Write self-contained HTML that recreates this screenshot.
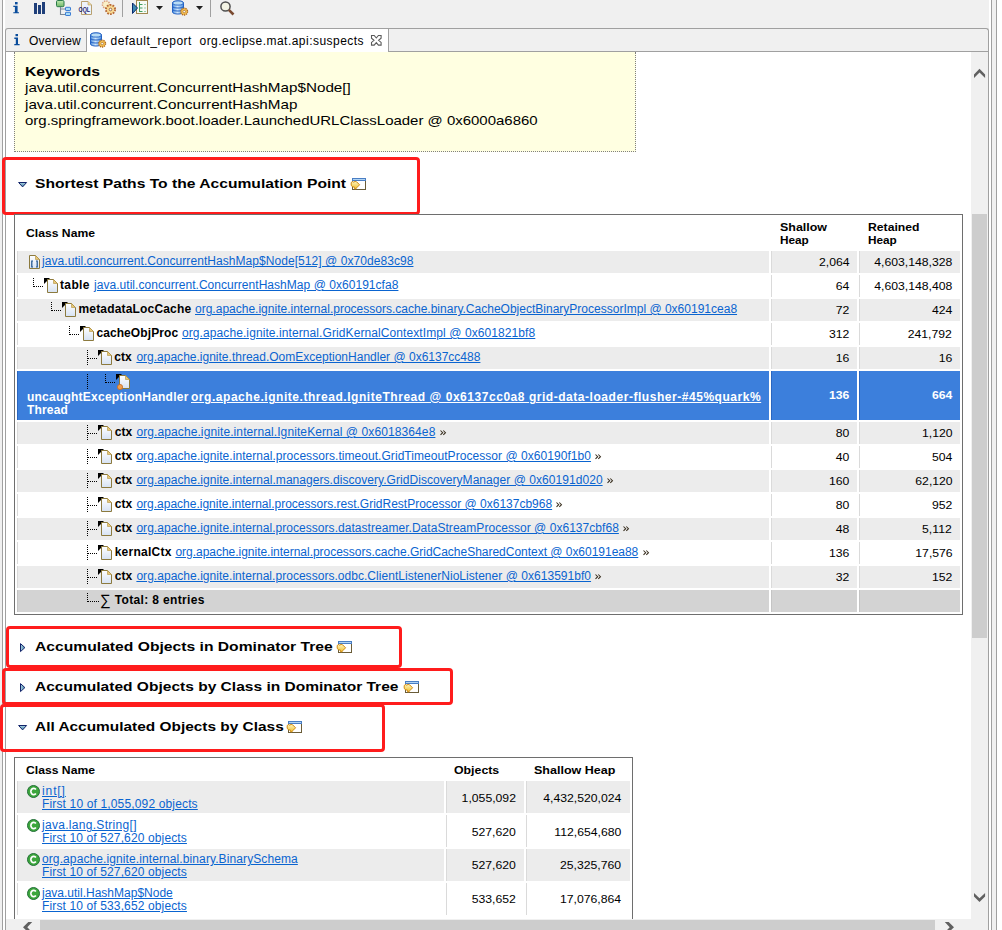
<!DOCTYPE html><html><head><meta charset="utf-8"><style>
html,body{margin:0;padding:0}
body{width:1002px;height:930px;overflow:hidden;position:relative;background:#f0f0f0;font-family:"Liberation Sans",sans-serif}
.a{position:absolute}
.t{position:absolute;white-space:nowrap}
.u{text-decoration:underline;color:#1a5fd6}
svg{position:absolute;overflow:visible}
</style></head><body>
<div class="a" style="left:2px;top:0px;width:1px;height:930px;background:#a0a0a0"></div>
<div class="a" style="left:3px;top:0px;width:2px;height:930px;background:#fff"></div>
<div class="a" style="left:989px;top:0px;width:2px;height:930px;background:#fff"></div>
<div class="a" style="left:991px;top:0px;width:1px;height:930px;background:#a0a0a0"></div>
<div class="a" style="left:996px;top:0px;width:1px;height:930px;background:#a0a0a0"></div>
<div class="a" style="left:997px;top:0px;width:5px;height:930px;background:#fff"></div>
<div class="a" style="left:5px;top:28px;width:982px;height:902px;border:1px solid #a0a0a0;border-bottom:none;border-radius:3px 3px 0 0;background:#f0f0f0"></div>
<div class="a" style="left:6px;top:51px;width:982px;height:1px;background:#a0a0a0"></div>
<div class="a" style="left:87px;top:29px;width:301px;height:23px;background:#fff"></div>
<div class="a" style="left:86px;top:29px;width:1px;height:22px;background:#a0a0a0"></div>
<div class="a" style="left:388px;top:29px;width:1px;height:22px;background:#a0a0a0"></div>
<div class="a" style="left:6px;top:52px;width:965px;height:867px;background:#fff"></div>
<svg style="left:14px;top:34px" width="6" height="12"><rect x="1.5" y="0" width="2.5" height="2.2" fill="#0a4d9c"/><path d="M0.3,3.6 H4 V10 H5.6 V11.3 H0.3 V10 H1.8 V4.9 H0.3 Z" fill="#0a4d9c"/></svg>
<div class="t" style="left:29px;top:35.44px;font-size:12px;line-height:13.8px;font-weight:normal;color:#000;letter-spacing:0.25px;">Overview</div>
<svg style="left:90px;top:32px" width="17" height="16">
<defs><linearGradient id="db90" x1="0" x2="1"><stop offset="0" stop-color="#4a8ee0"/><stop offset="0.45" stop-color="#cfe6fa"/><stop offset="1" stop-color="#4a8ee0"/></linearGradient></defs>
<path d="M0.5,3 C0.5,0.3 11.5,0.3 11.5,3 V12 C11.5,14.7 0.5,14.7 0.5,12 Z" fill="url(#db90)" stroke="#2462c4" stroke-width="1"/>
<ellipse cx="6" cy="3" rx="5.3" ry="2.1" fill="#b8dcf6" stroke="#2462c4" stroke-width="0.9"/>
<path d="M0.5,6.3 C0.5,8.6 11.5,8.6 11.5,6.3 M0.5,9.3 C0.5,11.6 11.5,11.6 11.5,9.3" fill="none" stroke="#2462c4" stroke-width="1"/>
<circle cx="12.2" cy="11.6" r="3.4" fill="#f5c050" stroke="#b06a20" stroke-width="1.3" stroke-dasharray="1.3 0.8"/>
<circle cx="12.2" cy="11.6" r="1.2" fill="#fff" stroke="#9a6020" stroke-width="0.6"/>
</svg>
<div class="t" style="left:110.5px;top:35.44px;font-size:12px;line-height:13.8px;font-weight:normal;color:#000;letter-spacing:0.53px;">default_report</div>
<div class="t" style="left:199.5px;top:35.44px;font-size:12px;line-height:13.8px;font-weight:normal;color:#000;letter-spacing:0.47px;">org.eclipse.mat.api:suspects</div>
<svg style="left:371px;top:35px" width="11" height="11"><path d="M0.5,0.5 H3.2 L5.3,3 L7.4,0.5 H10.1 V3.2 L7.6,5.3 L10.1,7.4 V10.1 H7.4 L5.3,7.6 L3.2,10.1 H0.5 V7.4 L3,5.3 L0.5,3.2 Z" fill="#fff" stroke="#5a5a5a" stroke-width="1.1"/></svg>
<svg style="left:13px;top:2px" width="7" height="12"><rect x="2" y="0" width="2.6" height="2.4" fill="#0a4d9c"/><path d="M0.3,3.8 H4.6 V10.3 H6 V11.3 H0.3 V10.3 H1.9 V5 H0.3 Z" fill="#0a4d9c"/></svg>
<svg style="left:34px;top:2px" width="12" height="12"><rect x="0" y="1" width="3" height="11" fill="#1f3f7a"/><rect x="4" y="3" width="3" height="9" fill="#1f3f7a"/><rect x="8" y="0" width="3" height="12" fill="#1f3f7a"/></svg>
<svg style="left:55px;top:0px" width="17" height="17"><defs><linearGradient id="tg" x1="0" y1="0" x2="0" y2="1"><stop offset="0" stop-color="#c0e8b0"/><stop offset="1" stop-color="#70b868"/></linearGradient></defs><rect x="1.5" y="0.5" width="7.5" height="6.2" rx="1.2" fill="url(#tg)" stroke="#2a7a4a"/><path d="M5.5,7 V14.5 H10.5 M5.5,9 H10.5" fill="none" stroke="#7a8898" stroke-width="1.1"/><rect x="10.5" y="7.3" width="5" height="3.2" rx="0.6" fill="#a8dcf8" stroke="#2a70d0" stroke-width="0.9"/><rect x="10.5" y="12.3" width="5" height="3.2" rx="0.6" fill="#a8dcf8" stroke="#2a70d0" stroke-width="0.9"/></svg>
<svg style="left:78px;top:1px" width="15" height="15"><path d="M3.5,0.5 H10 L13.5,4 V13.5 H3.5 Z" fill="#eef3fb" stroke="#b8a070"/><path d="M10,0.5 V4 H13.5" fill="#f0d890" stroke="#b8a070" stroke-width="0.6"/><text x="0.5" y="11" font-family="Liberation Sans" font-weight="bold" font-size="7.5" fill="#1a2070" textLength="11.5" lengthAdjust="spacingAndGlyphs">OQL</text></svg>
<svg style="left:100px;top:0px" width="17" height="17"><circle cx="6" cy="4.5" r="3.6" fill="#faf0c8" stroke="#d8a080" stroke-width="1.5" stroke-dasharray="1.4 1"/><circle cx="10.5" cy="9.5" r="4.6" fill="#f8d890" stroke="#b86a38" stroke-width="1.9" stroke-dasharray="1.7 1.2"/><circle cx="10.5" cy="9.5" r="1.3" fill="#fff" stroke="#805040" stroke-width="0.8"/></svg>
<div class="a" style="left:122px;top:0px;width:1px;height:17px;background:#a0a0a0"></div>
<svg style="left:132px;top:0px" width="17" height="15"><rect x="4.5" y="0.5" width="11" height="13" fill="#f6faf4" stroke="#a08850"/><path d="M7.5,2 V12 M7.5,4.5 H10.5 M7.5,8 H10.5 M7.5,11.5 H10.5" stroke="#40a060" stroke-width="1" fill="none"/><path d="M12.5,4.5 h1 M12.5,8 h1 M12.5,11.5 h1" stroke="#40a060" stroke-width="1.2"/><path d="M0.5,3 L5.5,8 L0.5,13.5 Z" fill="#3a88b0" stroke="#0a2a70" stroke-width="1"/></svg>
<svg style="left:156px;top:6px" width="8" height="5"><path d="M0,0 H7 L3.5,4 Z" fill="#202020"/></svg>
<svg style="left:172px;top:0px" width="17" height="16">
<defs><linearGradient id="db172" x1="0" x2="1"><stop offset="0" stop-color="#4a8ee0"/><stop offset="0.45" stop-color="#cfe6fa"/><stop offset="1" stop-color="#4a8ee0"/></linearGradient></defs>
<path d="M0.5,3 C0.5,0.3 11.5,0.3 11.5,3 V12 C11.5,14.7 0.5,14.7 0.5,12 Z" fill="url(#db172)" stroke="#2462c4" stroke-width="1"/>
<ellipse cx="6" cy="3" rx="5.3" ry="2.1" fill="#b8dcf6" stroke="#2462c4" stroke-width="0.9"/>
<path d="M0.5,6.3 C0.5,8.6 11.5,8.6 11.5,6.3 M0.5,9.3 C0.5,11.6 11.5,11.6 11.5,9.3" fill="none" stroke="#2462c4" stroke-width="1"/>
<circle cx="12.2" cy="11.6" r="3.4" fill="#f5c050" stroke="#b06a20" stroke-width="1.3" stroke-dasharray="1.3 0.8"/>
<circle cx="12.2" cy="11.6" r="1.2" fill="#fff" stroke="#9a6020" stroke-width="0.6"/>
</svg>
<svg style="left:196px;top:6px" width="8" height="5"><path d="M0,0 H7 L3.5,4 Z" fill="#202020"/></svg>
<div class="a" style="left:210px;top:0px;width:1px;height:17px;background:#a0a0a0"></div>
<svg style="left:220px;top:1px" width="15" height="15"><circle cx="5.5" cy="5.5" r="4.6" fill="#f4f4e4" stroke="#505050" stroke-width="1.5"/><path d="M8.8,8.8 L13.5,13.5" stroke="#7a4a30" stroke-width="2.6"/></svg>
<div class="a" style="left:14px;top:52px;width:620px;height:99px;border:1px dotted #808080;border-top:none;background:#ffffe1"></div>
<div class="t" style="left:25.3px;top:64.52px;font-size:13px;line-height:14.95px;font-weight:bold;color:#000;letter-spacing:0px;transform:scaleX(1.208);transform-origin:0 0;">Keywords</div>
<div class="t" style="left:25.3px;top:80.52px;font-size:13px;line-height:14.95px;font-weight:normal;color:#000;letter-spacing:0px;transform:scaleX(1.171);transform-origin:0 0;">java.util.concurrent.ConcurrentHashMap$Node[]</div>
<div class="t" style="left:25.3px;top:97.82px;font-size:13px;line-height:14.95px;font-weight:normal;color:#000;letter-spacing:0px;transform:scaleX(1.171);transform-origin:0 0;">java.util.concurrent.ConcurrentHashMap</div>
<div class="t" style="left:25.3px;top:113.52px;font-size:13px;line-height:14.95px;font-weight:normal;color:#000;letter-spacing:0px;transform:scaleX(1.151);transform-origin:0 0;">org.springframework.boot.loader.LaunchedURLClassLoader @ 0x6000a6860</div>
<svg style="left:18px;top:182px" width="10" height="6"><defs><linearGradient id="td182" x1="0" y1="0" x2="0" y2="1"><stop offset="0" stop-color="#a8d0e0"/><stop offset="1" stop-color="#4a88a8"/></linearGradient></defs><path d="M0.6,0.5 H8.6 L4.6,4.9 Z" fill="url(#td182)" stroke="#12246a" stroke-width="1" stroke-linejoin="round"/></svg>
<div class="t" style="left:34.5px;top:176.72px;font-size:13px;line-height:14.95px;font-weight:bold;color:#000;letter-spacing:0px;transform:scaleX(1.203);transform-origin:0 0;">Shortest Paths To the Accumulation Point</div>
<svg style="left:350px;top:178px" width="17" height="13"><defs><linearGradient id="sg352_178" x1="0" y1="0" x2="0" y2="1"><stop offset="0" stop-color="#fff6c0"/><stop offset="1" stop-color="#f0c030"/></linearGradient></defs><rect x="2.5" y="0.5" width="13" height="11" fill="#fff" stroke="#6a5c38"/><rect x="2" y="0" width="14" height="3" fill="#4a7ec4"/><rect x="3" y="1" width="12" height="1" fill="#b0d4f4"/><path d="M1.2,4.5 Q2.5,2.8 3.8,4.2 Q5,2.6 6.6,3.8 L9.6,6.8 L6.6,9.8 L6,10.8 H4.6 V9.2 Q2,9.4 1.2,7.2 Z" fill="url(#sg352_178)" stroke="#d08a10" stroke-width="1"/></svg>
<div class="a" style="left:2px;top:157px;width:412px;height:52px;border:3px solid #ff1c1c;border-radius:4px"></div>
<div class="a" style="left:14px;top:214px;width:947px;height:399px;border:1px solid #6e6e6e;background:#fff"></div>
<div class="t" style="left:25.5px;top:227px;font-size:11px;line-height:12.65px;font-weight:bold;color:#000;letter-spacing:0px;transform:scaleX(1.106);transform-origin:0 0;">Class Name</div>
<div class="t" style="left:779.5px;top:221px;font-size:11px;line-height:12.65px;font-weight:bold;color:#000;letter-spacing:0px;transform:scaleX(1.131);transform-origin:0 0;">Shallow</div>
<div class="t" style="left:779.5px;top:234px;font-size:11px;line-height:12.65px;font-weight:bold;color:#000;letter-spacing:0px;transform:scaleX(1.07);transform-origin:0 0;">Heap</div>
<div class="t" style="left:868px;top:221px;font-size:11px;line-height:12.65px;font-weight:bold;color:#000;letter-spacing:0px;transform:scaleX(1.108);transform-origin:0 0;">Retained</div>
<div class="t" style="left:868px;top:234px;font-size:11px;line-height:12.65px;font-weight:bold;color:#000;letter-spacing:0px;transform:scaleX(1.07);transform-origin:0 0;">Heap</div>
<div class="a" style="left:17px;top:251px;width:752px;height:22px;background:#ececec;border-left:1px solid #dadada;box-sizing:border-box"></div>
<div class="a" style="left:771px;top:251px;width:86px;height:22px;background:#ececec;border-left:1px solid #dadada;box-sizing:border-box"></div>
<div class="a" style="left:859px;top:251px;width:101px;height:22px;background:#ececec;border-left:1px solid #dadada;box-sizing:border-box"></div>
<div class="a" style="left:17px;top:275px;width:752px;height:22px;background:#fff;border-left:1px solid #dadada;box-sizing:border-box"></div>
<div class="a" style="left:771px;top:275px;width:86px;height:22px;background:#fff;border-left:1px solid #dadada;box-sizing:border-box"></div>
<div class="a" style="left:859px;top:275px;width:101px;height:22px;background:#fff;border-left:1px solid #dadada;box-sizing:border-box"></div>
<div class="a" style="left:17px;top:299px;width:752px;height:22px;background:#ececec;border-left:1px solid #dadada;box-sizing:border-box"></div>
<div class="a" style="left:771px;top:299px;width:86px;height:22px;background:#ececec;border-left:1px solid #dadada;box-sizing:border-box"></div>
<div class="a" style="left:859px;top:299px;width:101px;height:22px;background:#ececec;border-left:1px solid #dadada;box-sizing:border-box"></div>
<div class="a" style="left:17px;top:323px;width:752px;height:22px;background:#fff;border-left:1px solid #dadada;box-sizing:border-box"></div>
<div class="a" style="left:771px;top:323px;width:86px;height:22px;background:#fff;border-left:1px solid #dadada;box-sizing:border-box"></div>
<div class="a" style="left:859px;top:323px;width:101px;height:22px;background:#fff;border-left:1px solid #dadada;box-sizing:border-box"></div>
<div class="a" style="left:17px;top:347px;width:752px;height:22px;background:#ececec;border-left:1px solid #dadada;box-sizing:border-box"></div>
<div class="a" style="left:771px;top:347px;width:86px;height:22px;background:#ececec;border-left:1px solid #dadada;box-sizing:border-box"></div>
<div class="a" style="left:859px;top:347px;width:101px;height:22px;background:#ececec;border-left:1px solid #dadada;box-sizing:border-box"></div>
<div class="a" style="left:17px;top:371px;width:752px;height:49px;background:#3c7fdc;border-left:1px solid #2a66c0;box-sizing:border-box"></div>
<div class="a" style="left:771px;top:371px;width:86px;height:49px;background:#3c7fdc;border-left:1px solid #2a66c0;box-sizing:border-box"></div>
<div class="a" style="left:859px;top:371px;width:101px;height:49px;background:#3c7fdc;border-left:1px solid #2a66c0;box-sizing:border-box"></div>
<div class="a" style="left:17px;top:422px;width:752px;height:22px;background:#ececec;border-left:1px solid #dadada;box-sizing:border-box"></div>
<div class="a" style="left:771px;top:422px;width:86px;height:22px;background:#ececec;border-left:1px solid #dadada;box-sizing:border-box"></div>
<div class="a" style="left:859px;top:422px;width:101px;height:22px;background:#ececec;border-left:1px solid #dadada;box-sizing:border-box"></div>
<div class="a" style="left:17px;top:446px;width:752px;height:22px;background:#fff;border-left:1px solid #dadada;box-sizing:border-box"></div>
<div class="a" style="left:771px;top:446px;width:86px;height:22px;background:#fff;border-left:1px solid #dadada;box-sizing:border-box"></div>
<div class="a" style="left:859px;top:446px;width:101px;height:22px;background:#fff;border-left:1px solid #dadada;box-sizing:border-box"></div>
<div class="a" style="left:17px;top:470px;width:752px;height:22px;background:#ececec;border-left:1px solid #dadada;box-sizing:border-box"></div>
<div class="a" style="left:771px;top:470px;width:86px;height:22px;background:#ececec;border-left:1px solid #dadada;box-sizing:border-box"></div>
<div class="a" style="left:859px;top:470px;width:101px;height:22px;background:#ececec;border-left:1px solid #dadada;box-sizing:border-box"></div>
<div class="a" style="left:17px;top:494px;width:752px;height:22px;background:#fff;border-left:1px solid #dadada;box-sizing:border-box"></div>
<div class="a" style="left:771px;top:494px;width:86px;height:22px;background:#fff;border-left:1px solid #dadada;box-sizing:border-box"></div>
<div class="a" style="left:859px;top:494px;width:101px;height:22px;background:#fff;border-left:1px solid #dadada;box-sizing:border-box"></div>
<div class="a" style="left:17px;top:518px;width:752px;height:22px;background:#ececec;border-left:1px solid #dadada;box-sizing:border-box"></div>
<div class="a" style="left:771px;top:518px;width:86px;height:22px;background:#ececec;border-left:1px solid #dadada;box-sizing:border-box"></div>
<div class="a" style="left:859px;top:518px;width:101px;height:22px;background:#ececec;border-left:1px solid #dadada;box-sizing:border-box"></div>
<div class="a" style="left:17px;top:542px;width:752px;height:22px;background:#fff;border-left:1px solid #dadada;box-sizing:border-box"></div>
<div class="a" style="left:771px;top:542px;width:86px;height:22px;background:#fff;border-left:1px solid #dadada;box-sizing:border-box"></div>
<div class="a" style="left:859px;top:542px;width:101px;height:22px;background:#fff;border-left:1px solid #dadada;box-sizing:border-box"></div>
<div class="a" style="left:17px;top:566px;width:752px;height:22px;background:#ececec;border-left:1px solid #dadada;box-sizing:border-box"></div>
<div class="a" style="left:771px;top:566px;width:86px;height:22px;background:#ececec;border-left:1px solid #dadada;box-sizing:border-box"></div>
<div class="a" style="left:859px;top:566px;width:101px;height:22px;background:#ececec;border-left:1px solid #dadada;box-sizing:border-box"></div>
<div class="a" style="left:17px;top:590px;width:752px;height:22px;background:#d3d3d3;border-left:1px solid #c4c4c4;box-sizing:border-box"></div>
<div class="a" style="left:771px;top:590px;width:86px;height:22px;background:#d3d3d3;border-left:1px solid #c4c4c4;box-sizing:border-box"></div>
<div class="a" style="left:859px;top:590px;width:101px;height:22px;background:#d3d3d3;border-left:1px solid #c4c4c4;box-sizing:border-box"></div>
<svg style="left:29px;top:255px" width="12" height="15"><defs><linearGradient id="ag29_255" x1="0" y1="0" x2="0" y2="1"><stop offset="0" stop-color="#ffffff"/><stop offset="1" stop-color="#d6e2f3"/></linearGradient></defs><path d="M0.5,0.5 H6.5 L10.5,4.5 V13.5 H0.5 Z" fill="url(#ag29_255)" stroke="#8c7a3e"/><path d="M6.5,0.5 V4.5 H10.5 Z" fill="#e8c878" stroke="#b09040" stroke-width="0.6"/><path d="M4,6 H2.8 V12 H4 M7,6 H8.2 V12 H7" fill="none" stroke="#1a5090" stroke-width="1.2"/></svg>
<div class="t" style="left:42px;top:255.44px;font-size:12px;line-height:13.8px;font-weight:normal;color:#0a64d0;letter-spacing:0.06px;text-decoration:underline;text-underline-offset:1px">java.util.concurrent.ConcurrentHashMap$Node[512] @ 0x70de83c98</div>
<div class="t" style="right:152.40px;top:256px;font-size:11px;line-height:12.65px;font-weight:normal;color:#000;letter-spacing:0px;transform:scaleX(1.11);transform-origin:100% 0;">2,064</div>
<div class="t" style="right:49.80px;top:256px;font-size:11px;line-height:12.65px;font-weight:normal;color:#000;letter-spacing:0px;transform:scaleX(1.11);transform-origin:100% 0;">4,603,148,328</div>
<svg style="left:33px;top:278px" width="1" height="9"><line x1="0.5" y1="0" x2="0.5" y2="9" stroke="#000" stroke-dasharray="1 1"/></svg>
<svg style="left:34px;top:286px" width="10" height="1"><line x1="0" y1="0.5" x2="10" y2="0.5" stroke="#000" stroke-dasharray="1 1"/></svg>
<svg style="left:44px;top:278px" width="15" height="16"><defs><linearGradient id="dg44_278" x1="0" y1="0" x2="0" y2="1"><stop offset="0" stop-color="#ffffff"/><stop offset="1" stop-color="#d6e2f3"/></linearGradient></defs><path d="M0,0 H6 L0,6 Z" fill="#000"/><path d="M3.5,1.5 H9.5 L13.5,5.5 V14.5 H3.5 Z" fill="url(#dg44_278)" stroke="#8c7a3e"/><path d="M9.5,1.5 V5.5 H13.5 Z" fill="#e8c878" stroke="#b09040" stroke-width="0.6"/></svg>
<div class="t" style="left:60px;top:278.94px;font-size:12px;line-height:13.8px;font-weight:bold;color:#000;letter-spacing:0.36px;">table</div>
<div class="t" style="left:94px;top:278.94px;font-size:12px;line-height:13.8px;font-weight:normal;color:#0a64d0;letter-spacing:0.04px;text-decoration:underline;text-underline-offset:1px">java.util.concurrent.ConcurrentHashMap @ 0x60191cfa8</div>
<div class="t" style="right:152.40px;top:280px;font-size:11px;line-height:12.65px;font-weight:normal;color:#000;letter-spacing:0px;transform:scaleX(1.11);transform-origin:100% 0;">64</div>
<div class="t" style="right:49.80px;top:280px;font-size:11px;line-height:12.65px;font-weight:normal;color:#000;letter-spacing:0px;transform:scaleX(1.11);transform-origin:100% 0;">4,603,148,408</div>
<svg style="left:51px;top:302px" width="1" height="9"><line x1="0.5" y1="0" x2="0.5" y2="9" stroke="#000" stroke-dasharray="1 1"/></svg>
<svg style="left:52px;top:310px" width="10" height="1"><line x1="0" y1="0.5" x2="10" y2="0.5" stroke="#000" stroke-dasharray="1 1"/></svg>
<svg style="left:62px;top:302px" width="15" height="16"><defs><linearGradient id="dg62_302" x1="0" y1="0" x2="0" y2="1"><stop offset="0" stop-color="#ffffff"/><stop offset="1" stop-color="#d6e2f3"/></linearGradient></defs><path d="M0,0 H6 L0,6 Z" fill="#000"/><path d="M3.5,1.5 H9.5 L13.5,5.5 V14.5 H3.5 Z" fill="url(#dg62_302)" stroke="#8c7a3e"/><path d="M9.5,1.5 V5.5 H13.5 Z" fill="#e8c878" stroke="#b09040" stroke-width="0.6"/></svg>
<div class="t" style="left:78.5px;top:302.94px;font-size:12px;line-height:13.8px;font-weight:bold;color:#000;letter-spacing:0.17px;">metadataLocCache</div>
<div class="t" style="left:195px;top:302.94px;font-size:12px;line-height:13.8px;font-weight:normal;color:#0a64d0;letter-spacing:0.005px;text-decoration:underline;text-underline-offset:1px">org.apache.ignite.internal.processors.cache.binary.CacheObjectBinaryProcessorImpl @ 0x60191cea8</div>
<div class="t" style="right:152.40px;top:304px;font-size:11px;line-height:12.65px;font-weight:normal;color:#000;letter-spacing:0px;transform:scaleX(1.11);transform-origin:100% 0;">72</div>
<div class="t" style="right:49.80px;top:304px;font-size:11px;line-height:12.65px;font-weight:normal;color:#000;letter-spacing:0px;transform:scaleX(1.11);transform-origin:100% 0;">424</div>
<svg style="left:69px;top:326px" width="1" height="9"><line x1="0.5" y1="0" x2="0.5" y2="9" stroke="#000" stroke-dasharray="1 1"/></svg>
<svg style="left:70px;top:334px" width="10" height="1"><line x1="0" y1="0.5" x2="10" y2="0.5" stroke="#000" stroke-dasharray="1 1"/></svg>
<svg style="left:80px;top:326px" width="15" height="16"><defs><linearGradient id="dg80_326" x1="0" y1="0" x2="0" y2="1"><stop offset="0" stop-color="#ffffff"/><stop offset="1" stop-color="#d6e2f3"/></linearGradient></defs><path d="M0,0 H6 L0,6 Z" fill="#000"/><path d="M3.5,1.5 H9.5 L13.5,5.5 V14.5 H3.5 Z" fill="url(#dg80_326)" stroke="#8c7a3e"/><path d="M9.5,1.5 V5.5 H13.5 Z" fill="#e8c878" stroke="#b09040" stroke-width="0.6"/></svg>
<div class="t" style="left:96.4px;top:326.94px;font-size:12px;line-height:13.8px;font-weight:bold;color:#000;letter-spacing:0.09px;">cacheObjProc</div>
<div class="t" style="left:182px;top:326.94px;font-size:12px;line-height:13.8px;font-weight:normal;color:#0a64d0;letter-spacing:0.09px;text-decoration:underline;text-underline-offset:1px">org.apache.ignite.internal.GridKernalContextImpl @ 0x601821bf8</div>
<div class="t" style="right:152.40px;top:328px;font-size:11px;line-height:12.65px;font-weight:normal;color:#000;letter-spacing:0px;transform:scaleX(1.11);transform-origin:100% 0;">312</div>
<div class="t" style="right:49.80px;top:328px;font-size:11px;line-height:12.65px;font-weight:normal;color:#000;letter-spacing:0px;transform:scaleX(1.11);transform-origin:100% 0;">241,792</div>
<svg style="left:87px;top:350px" width="1" height="16"><line x1="0.5" y1="0" x2="0.5" y2="16" stroke="#000" stroke-dasharray="1 1"/></svg>
<svg style="left:88px;top:358px" width="10" height="1"><line x1="0" y1="0.5" x2="10" y2="0.5" stroke="#000" stroke-dasharray="1 1"/></svg>
<svg style="left:98px;top:350px" width="15" height="16"><defs><linearGradient id="dg98_350" x1="0" y1="0" x2="0" y2="1"><stop offset="0" stop-color="#ffffff"/><stop offset="1" stop-color="#d6e2f3"/></linearGradient></defs><path d="M0,0 H6 L0,6 Z" fill="#000"/><path d="M3.5,1.5 H9.5 L13.5,5.5 V14.5 H3.5 Z" fill="url(#dg98_350)" stroke="#8c7a3e"/><path d="M9.5,1.5 V5.5 H13.5 Z" fill="#e8c878" stroke="#b09040" stroke-width="0.6"/></svg>
<div class="t" style="left:114.3px;top:350.94px;font-size:12px;line-height:13.8px;font-weight:bold;color:#000;letter-spacing:0.06px;">ctx</div>
<div class="t" style="left:136.4px;top:350.94px;font-size:12px;line-height:13.8px;font-weight:normal;color:#0a64d0;letter-spacing:0.005px;text-decoration:underline;text-underline-offset:1px">org.apache.ignite.thread.OomExceptionHandler @ 0x6137cc488</div>
<div class="t" style="right:152.40px;top:352px;font-size:11px;line-height:12.65px;font-weight:normal;color:#000;letter-spacing:0px;transform:scaleX(1.11);transform-origin:100% 0;">16</div>
<div class="t" style="right:49.80px;top:352px;font-size:11px;line-height:12.65px;font-weight:normal;color:#000;letter-spacing:0px;transform:scaleX(1.11);transform-origin:100% 0;">16</div>
<svg style="left:87px;top:374px" width="1" height="15"><line x1="0.5" y1="0" x2="0.5" y2="15" stroke="#000" stroke-dasharray="1 1"/></svg>
<svg style="left:105px;top:374px" width="1" height="9"><line x1="0.5" y1="0" x2="0.5" y2="9" stroke="#000" stroke-dasharray="1 1"/></svg>
<svg style="left:106px;top:382px" width="10" height="1"><line x1="0" y1="0.5" x2="10" y2="0.5" stroke="#000" stroke-dasharray="1 1"/></svg>
<svg style="left:116px;top:374px" width="15" height="16"><defs><linearGradient id="dg116_374" x1="0" y1="0" x2="0" y2="1"><stop offset="0" stop-color="#ffffff"/><stop offset="1" stop-color="#d6e2f3"/></linearGradient></defs><path d="M0,0 H6 L0,6 Z" fill="#000"/><path d="M3.5,1.5 H9.5 L13.5,5.5 V14.5 H3.5 Z" fill="url(#dg116_374)" stroke="#8c7a3e"/><path d="M9.5,1.5 V5.5 H13.5 Z" fill="#e8c878" stroke="#b09040" stroke-width="0.6"/><circle cx="4" cy="13" r="2.6" fill="#f0a050" stroke="#c86a20" stroke-width="0.8"/></svg>
<div class="t" style="left:27px;top:390.94px;font-size:12px;line-height:13.8px;font-weight:bold;color:#fff;letter-spacing:0.23px;">uncaughtExceptionHandler</div>
<div class="t" style="left:191px;top:390.94px;font-size:12px;line-height:13.8px;font-weight:bold;color:#fff;letter-spacing:0.54px;text-decoration:underline;text-underline-offset:1px">org.apache.ignite.thread.IgniteThread @ 0x6137cc0a8 grid-data-loader-flusher-#45%quark%</div>
<div class="t" style="left:27px;top:404.44px;font-size:12px;line-height:13.8px;font-weight:bold;color:#fff;letter-spacing:0.17px;">Thread</div>
<div class="t" style="right:152.40px;top:389px;font-size:11px;line-height:12.65px;font-weight:bold;color:#fff;letter-spacing:0px;transform:scaleX(1.11);transform-origin:100% 0;">136</div>
<div class="t" style="right:49.80px;top:389px;font-size:11px;line-height:12.65px;font-weight:bold;color:#fff;letter-spacing:0px;transform:scaleX(1.11);transform-origin:100% 0;">664</div>
<svg style="left:87px;top:425px" width="1" height="16"><line x1="0.5" y1="0" x2="0.5" y2="16" stroke="#000" stroke-dasharray="1 1"/></svg>
<svg style="left:88px;top:433px" width="10" height="1"><line x1="0" y1="0.5" x2="10" y2="0.5" stroke="#000" stroke-dasharray="1 1"/></svg>
<svg style="left:98px;top:425px" width="15" height="16"><defs><linearGradient id="dg98_425" x1="0" y1="0" x2="0" y2="1"><stop offset="0" stop-color="#ffffff"/><stop offset="1" stop-color="#d6e2f3"/></linearGradient></defs><path d="M0,0 H6 L0,6 Z" fill="#000"/><path d="M3.5,1.5 H9.5 L13.5,5.5 V14.5 H3.5 Z" fill="url(#dg98_425)" stroke="#8c7a3e"/><path d="M9.5,1.5 V5.5 H13.5 Z" fill="#e8c878" stroke="#b09040" stroke-width="0.6"/></svg>
<div class="t" style="left:114.7px;top:425.94px;font-size:12px;line-height:13.8px;font-weight:bold;color:#000;letter-spacing:0.06px;">ctx</div>
<div class="t" style="left:136.4px;top:425.94px;font-size:12px;line-height:13.8px;font-weight:normal;color:#0a64d0;letter-spacing:0.1px;text-decoration:underline;text-underline-offset:1px">org.apache.ignite.internal.IgniteKernal @ 0x6018364e8</div>
<svg style="left:439.5px;top:430px" width="8" height="6"><path d="M0.5,0.5 L2.7,2.7 L0.5,4.9 M3.3,0.5 L5.5,2.7 L3.3,4.9" fill="none" stroke="#3a3020" stroke-width="1.05"/></svg>
<div class="t" style="right:152.40px;top:427px;font-size:11px;line-height:12.65px;font-weight:normal;color:#000;letter-spacing:0px;transform:scaleX(1.11);transform-origin:100% 0;">80</div>
<div class="t" style="right:49.80px;top:427px;font-size:11px;line-height:12.65px;font-weight:normal;color:#000;letter-spacing:0px;transform:scaleX(1.11);transform-origin:100% 0;">1,120</div>
<svg style="left:87px;top:449px" width="1" height="16"><line x1="0.5" y1="0" x2="0.5" y2="16" stroke="#000" stroke-dasharray="1 1"/></svg>
<svg style="left:88px;top:457px" width="10" height="1"><line x1="0" y1="0.5" x2="10" y2="0.5" stroke="#000" stroke-dasharray="1 1"/></svg>
<svg style="left:98px;top:449px" width="15" height="16"><defs><linearGradient id="dg98_449" x1="0" y1="0" x2="0" y2="1"><stop offset="0" stop-color="#ffffff"/><stop offset="1" stop-color="#d6e2f3"/></linearGradient></defs><path d="M0,0 H6 L0,6 Z" fill="#000"/><path d="M3.5,1.5 H9.5 L13.5,5.5 V14.5 H3.5 Z" fill="url(#dg98_449)" stroke="#8c7a3e"/><path d="M9.5,1.5 V5.5 H13.5 Z" fill="#e8c878" stroke="#b09040" stroke-width="0.6"/></svg>
<div class="t" style="left:114.7px;top:449.94px;font-size:12px;line-height:13.8px;font-weight:bold;color:#000;letter-spacing:0.06px;">ctx</div>
<div class="t" style="left:136.4px;top:449.94px;font-size:12px;line-height:13.8px;font-weight:normal;color:#0a64d0;letter-spacing:0.05px;text-decoration:underline;text-underline-offset:1px">org.apache.ignite.internal.processors.timeout.GridTimeoutProcessor @ 0x60190f1b0</div>
<svg style="left:595px;top:454px" width="8" height="6"><path d="M0.5,0.5 L2.7,2.7 L0.5,4.9 M3.3,0.5 L5.5,2.7 L3.3,4.9" fill="none" stroke="#3a3020" stroke-width="1.05"/></svg>
<div class="t" style="right:152.40px;top:451px;font-size:11px;line-height:12.65px;font-weight:normal;color:#000;letter-spacing:0px;transform:scaleX(1.11);transform-origin:100% 0;">40</div>
<div class="t" style="right:49.80px;top:451px;font-size:11px;line-height:12.65px;font-weight:normal;color:#000;letter-spacing:0px;transform:scaleX(1.11);transform-origin:100% 0;">504</div>
<svg style="left:87px;top:473px" width="1" height="16"><line x1="0.5" y1="0" x2="0.5" y2="16" stroke="#000" stroke-dasharray="1 1"/></svg>
<svg style="left:88px;top:481px" width="10" height="1"><line x1="0" y1="0.5" x2="10" y2="0.5" stroke="#000" stroke-dasharray="1 1"/></svg>
<svg style="left:98px;top:473px" width="15" height="16"><defs><linearGradient id="dg98_473" x1="0" y1="0" x2="0" y2="1"><stop offset="0" stop-color="#ffffff"/><stop offset="1" stop-color="#d6e2f3"/></linearGradient></defs><path d="M0,0 H6 L0,6 Z" fill="#000"/><path d="M3.5,1.5 H9.5 L13.5,5.5 V14.5 H3.5 Z" fill="url(#dg98_473)" stroke="#8c7a3e"/><path d="M9.5,1.5 V5.5 H13.5 Z" fill="#e8c878" stroke="#b09040" stroke-width="0.6"/></svg>
<div class="t" style="left:114.7px;top:473.94px;font-size:12px;line-height:13.8px;font-weight:bold;color:#000;letter-spacing:0.06px;">ctx</div>
<div class="t" style="left:136.4px;top:473.94px;font-size:12px;line-height:13.8px;font-weight:normal;color:#0a64d0;letter-spacing:0.05px;text-decoration:underline;text-underline-offset:1px">org.apache.ignite.internal.managers.discovery.GridDiscoveryManager @ 0x60191d020</div>
<svg style="left:606.5px;top:478px" width="8" height="6"><path d="M0.5,0.5 L2.7,2.7 L0.5,4.9 M3.3,0.5 L5.5,2.7 L3.3,4.9" fill="none" stroke="#3a3020" stroke-width="1.05"/></svg>
<div class="t" style="right:152.40px;top:475px;font-size:11px;line-height:12.65px;font-weight:normal;color:#000;letter-spacing:0px;transform:scaleX(1.11);transform-origin:100% 0;">160</div>
<div class="t" style="right:49.80px;top:475px;font-size:11px;line-height:12.65px;font-weight:normal;color:#000;letter-spacing:0px;transform:scaleX(1.11);transform-origin:100% 0;">62,120</div>
<svg style="left:87px;top:497px" width="1" height="16"><line x1="0.5" y1="0" x2="0.5" y2="16" stroke="#000" stroke-dasharray="1 1"/></svg>
<svg style="left:88px;top:505px" width="10" height="1"><line x1="0" y1="0.5" x2="10" y2="0.5" stroke="#000" stroke-dasharray="1 1"/></svg>
<svg style="left:98px;top:497px" width="15" height="16"><defs><linearGradient id="dg98_497" x1="0" y1="0" x2="0" y2="1"><stop offset="0" stop-color="#ffffff"/><stop offset="1" stop-color="#d6e2f3"/></linearGradient></defs><path d="M0,0 H6 L0,6 Z" fill="#000"/><path d="M3.5,1.5 H9.5 L13.5,5.5 V14.5 H3.5 Z" fill="url(#dg98_497)" stroke="#8c7a3e"/><path d="M9.5,1.5 V5.5 H13.5 Z" fill="#e8c878" stroke="#b09040" stroke-width="0.6"/></svg>
<div class="t" style="left:114.7px;top:497.94px;font-size:12px;line-height:13.8px;font-weight:bold;color:#000;letter-spacing:0.06px;">ctx</div>
<div class="t" style="left:136.4px;top:497.94px;font-size:12px;line-height:13.8px;font-weight:normal;color:#0a64d0;letter-spacing:0.0px;text-decoration:underline;text-underline-offset:1px">org.apache.ignite.internal.processors.rest.GridRestProcessor @ 0x6137cb968</div>
<svg style="left:556px;top:502px" width="8" height="6"><path d="M0.5,0.5 L2.7,2.7 L0.5,4.9 M3.3,0.5 L5.5,2.7 L3.3,4.9" fill="none" stroke="#3a3020" stroke-width="1.05"/></svg>
<div class="t" style="right:152.40px;top:499px;font-size:11px;line-height:12.65px;font-weight:normal;color:#000;letter-spacing:0px;transform:scaleX(1.11);transform-origin:100% 0;">80</div>
<div class="t" style="right:49.80px;top:499px;font-size:11px;line-height:12.65px;font-weight:normal;color:#000;letter-spacing:0px;transform:scaleX(1.11);transform-origin:100% 0;">952</div>
<svg style="left:87px;top:521px" width="1" height="16"><line x1="0.5" y1="0" x2="0.5" y2="16" stroke="#000" stroke-dasharray="1 1"/></svg>
<svg style="left:88px;top:529px" width="10" height="1"><line x1="0" y1="0.5" x2="10" y2="0.5" stroke="#000" stroke-dasharray="1 1"/></svg>
<svg style="left:98px;top:521px" width="15" height="16"><defs><linearGradient id="dg98_521" x1="0" y1="0" x2="0" y2="1"><stop offset="0" stop-color="#ffffff"/><stop offset="1" stop-color="#d6e2f3"/></linearGradient></defs><path d="M0,0 H6 L0,6 Z" fill="#000"/><path d="M3.5,1.5 H9.5 L13.5,5.5 V14.5 H3.5 Z" fill="url(#dg98_521)" stroke="#8c7a3e"/><path d="M9.5,1.5 V5.5 H13.5 Z" fill="#e8c878" stroke="#b09040" stroke-width="0.6"/></svg>
<div class="t" style="left:114.7px;top:521.94px;font-size:12px;line-height:13.8px;font-weight:bold;color:#000;letter-spacing:0.06px;">ctx</div>
<div class="t" style="left:136.4px;top:521.94px;font-size:12px;line-height:13.8px;font-weight:normal;color:#0a64d0;letter-spacing:0.04px;text-decoration:underline;text-underline-offset:1px">org.apache.ignite.internal.processors.datastreamer.DataStreamProcessor @ 0x6137cbf68</div>
<svg style="left:623px;top:526px" width="8" height="6"><path d="M0.5,0.5 L2.7,2.7 L0.5,4.9 M3.3,0.5 L5.5,2.7 L3.3,4.9" fill="none" stroke="#3a3020" stroke-width="1.05"/></svg>
<div class="t" style="right:152.40px;top:523px;font-size:11px;line-height:12.65px;font-weight:normal;color:#000;letter-spacing:0px;transform:scaleX(1.11);transform-origin:100% 0;">48</div>
<div class="t" style="right:49.80px;top:523px;font-size:11px;line-height:12.65px;font-weight:normal;color:#000;letter-spacing:0px;transform:scaleX(1.11);transform-origin:100% 0;">5,112</div>
<svg style="left:87px;top:545px" width="1" height="16"><line x1="0.5" y1="0" x2="0.5" y2="16" stroke="#000" stroke-dasharray="1 1"/></svg>
<svg style="left:88px;top:553px" width="10" height="1"><line x1="0" y1="0.5" x2="10" y2="0.5" stroke="#000" stroke-dasharray="1 1"/></svg>
<svg style="left:98px;top:545px" width="15" height="16"><defs><linearGradient id="dg98_545" x1="0" y1="0" x2="0" y2="1"><stop offset="0" stop-color="#ffffff"/><stop offset="1" stop-color="#d6e2f3"/></linearGradient></defs><path d="M0,0 H6 L0,6 Z" fill="#000"/><path d="M3.5,1.5 H9.5 L13.5,5.5 V14.5 H3.5 Z" fill="url(#dg98_545)" stroke="#8c7a3e"/><path d="M9.5,1.5 V5.5 H13.5 Z" fill="#e8c878" stroke="#b09040" stroke-width="0.6"/></svg>
<div class="t" style="left:114.7px;top:545.94px;font-size:12px;line-height:13.8px;font-weight:bold;color:#000;letter-spacing:0.26px;">kernalCtx</div>
<div class="t" style="left:175.4px;top:545.94px;font-size:12px;line-height:13.8px;font-weight:normal;color:#0a64d0;letter-spacing:-0.02px;text-decoration:underline;text-underline-offset:1px">org.apache.ignite.internal.processors.cache.GridCacheSharedContext @ 0x60191ea88</div>
<svg style="left:643px;top:550px" width="8" height="6"><path d="M0.5,0.5 L2.7,2.7 L0.5,4.9 M3.3,0.5 L5.5,2.7 L3.3,4.9" fill="none" stroke="#3a3020" stroke-width="1.05"/></svg>
<div class="t" style="right:152.40px;top:547px;font-size:11px;line-height:12.65px;font-weight:normal;color:#000;letter-spacing:0px;transform:scaleX(1.11);transform-origin:100% 0;">136</div>
<div class="t" style="right:49.80px;top:547px;font-size:11px;line-height:12.65px;font-weight:normal;color:#000;letter-spacing:0px;transform:scaleX(1.11);transform-origin:100% 0;">17,576</div>
<svg style="left:87px;top:569px" width="1" height="16"><line x1="0.5" y1="0" x2="0.5" y2="16" stroke="#000" stroke-dasharray="1 1"/></svg>
<svg style="left:88px;top:577px" width="10" height="1"><line x1="0" y1="0.5" x2="10" y2="0.5" stroke="#000" stroke-dasharray="1 1"/></svg>
<svg style="left:98px;top:569px" width="15" height="16"><defs><linearGradient id="dg98_569" x1="0" y1="0" x2="0" y2="1"><stop offset="0" stop-color="#ffffff"/><stop offset="1" stop-color="#d6e2f3"/></linearGradient></defs><path d="M0,0 H6 L0,6 Z" fill="#000"/><path d="M3.5,1.5 H9.5 L13.5,5.5 V14.5 H3.5 Z" fill="url(#dg98_569)" stroke="#8c7a3e"/><path d="M9.5,1.5 V5.5 H13.5 Z" fill="#e8c878" stroke="#b09040" stroke-width="0.6"/></svg>
<div class="t" style="left:114.7px;top:569.94px;font-size:12px;line-height:13.8px;font-weight:bold;color:#000;letter-spacing:0.06px;">ctx</div>
<div class="t" style="left:136.4px;top:569.94px;font-size:12px;line-height:13.8px;font-weight:normal;color:#0a64d0;letter-spacing:0.035px;text-decoration:underline;text-underline-offset:1px">org.apache.ignite.internal.processors.odbc.ClientListenerNioListener @ 0x613591bf0</div>
<svg style="left:595px;top:574px" width="8" height="6"><path d="M0.5,0.5 L2.7,2.7 L0.5,4.9 M3.3,0.5 L5.5,2.7 L3.3,4.9" fill="none" stroke="#3a3020" stroke-width="1.05"/></svg>
<div class="t" style="right:152.40px;top:571px;font-size:11px;line-height:12.65px;font-weight:normal;color:#000;letter-spacing:0px;transform:scaleX(1.11);transform-origin:100% 0;">32</div>
<div class="t" style="right:49.80px;top:571px;font-size:11px;line-height:12.65px;font-weight:normal;color:#000;letter-spacing:0px;transform:scaleX(1.11);transform-origin:100% 0;">152</div>
<svg style="left:87px;top:593px" width="1" height="9"><line x1="0.5" y1="0" x2="0.5" y2="9" stroke="#000" stroke-dasharray="1 1"/></svg>
<svg style="left:88px;top:601px" width="11" height="1"><line x1="0" y1="0.5" x2="11" y2="0.5" stroke="#000" stroke-dasharray="1 1"/></svg>
<div class="t" style="left:100px;top:591px;font-size:15px;line-height:17px;color:#000">&sum;</div>
<div class="t" style="left:114.7px;top:594.44px;font-size:12px;line-height:13.8px;font-weight:bold;color:#000;letter-spacing:0.35px;">Total: 8 entries</div>
<svg style="left:20px;top:643px" width="6" height="10"><defs><linearGradient id="tr643" x1="0" y1="0" x2="1" y2="0"><stop offset="0" stop-color="#a8d0e0"/><stop offset="1" stop-color="#4a88a8"/></linearGradient></defs><path d="M0.5,0.6 V8.6 L4.9,4.6 Z" fill="url(#tr643)" stroke="#12246a" stroke-width="1" stroke-linejoin="round"/></svg>
<div class="t" style="left:34.5px;top:640.02px;font-size:13px;line-height:14.95px;font-weight:bold;color:#000;letter-spacing:0px;transform:scaleX(1.205);transform-origin:0 0;">Accumulated Objects in Dominator Tree</div>
<svg style="left:336px;top:641px" width="17" height="13"><defs><linearGradient id="sg338_641" x1="0" y1="0" x2="0" y2="1"><stop offset="0" stop-color="#fff6c0"/><stop offset="1" stop-color="#f0c030"/></linearGradient></defs><rect x="2.5" y="0.5" width="13" height="11" fill="#fff" stroke="#6a5c38"/><rect x="2" y="0" width="14" height="3" fill="#4a7ec4"/><rect x="3" y="1" width="12" height="1" fill="#b0d4f4"/><path d="M1.2,4.5 Q2.5,2.8 3.8,4.2 Q5,2.6 6.6,3.8 L9.6,6.8 L6.6,9.8 L6,10.8 H4.6 V9.2 Q2,9.4 1.2,7.2 Z" fill="url(#sg338_641)" stroke="#d08a10" stroke-width="1"/></svg>
<div class="a" style="left:6px;top:626px;width:390px;height:36px;border:3px solid #ff1c1c;border-radius:4px"></div>
<svg style="left:20px;top:683px" width="6" height="10"><defs><linearGradient id="tr683" x1="0" y1="0" x2="1" y2="0"><stop offset="0" stop-color="#a8d0e0"/><stop offset="1" stop-color="#4a88a8"/></linearGradient></defs><path d="M0.5,0.6 V8.6 L4.9,4.6 Z" fill="url(#tr683)" stroke="#12246a" stroke-width="1" stroke-linejoin="round"/></svg>
<div class="t" style="left:34.5px;top:679.82px;font-size:13px;line-height:14.95px;font-weight:bold;color:#000;letter-spacing:0px;transform:scaleX(1.195);transform-origin:0 0;">Accumulated Objects by Class in Dominator Tree</div>
<svg style="left:403px;top:681px" width="17" height="13"><defs><linearGradient id="sg405_681" x1="0" y1="0" x2="0" y2="1"><stop offset="0" stop-color="#fff6c0"/><stop offset="1" stop-color="#f0c030"/></linearGradient></defs><rect x="2.5" y="0.5" width="13" height="11" fill="#fff" stroke="#6a5c38"/><rect x="2" y="0" width="14" height="3" fill="#4a7ec4"/><rect x="3" y="1" width="12" height="1" fill="#b0d4f4"/><path d="M1.2,4.5 Q2.5,2.8 3.8,4.2 Q5,2.6 6.6,3.8 L9.6,6.8 L6.6,9.8 L6,10.8 H4.6 V9.2 Q2,9.4 1.2,7.2 Z" fill="url(#sg405_681)" stroke="#d08a10" stroke-width="1"/></svg>
<div class="a" style="left:2px;top:668px;width:445px;height:31px;border:3px solid #ff1c1c;border-radius:4px"></div>
<svg style="left:18px;top:725px" width="10" height="6"><defs><linearGradient id="td725" x1="0" y1="0" x2="0" y2="1"><stop offset="0" stop-color="#a8d0e0"/><stop offset="1" stop-color="#4a88a8"/></linearGradient></defs><path d="M0.6,0.5 H8.6 L4.6,4.9 Z" fill="url(#td725)" stroke="#12246a" stroke-width="1" stroke-linejoin="round"/></svg>
<div class="t" style="left:34.5px;top:719.82px;font-size:13px;line-height:14.95px;font-weight:bold;color:#000;letter-spacing:0px;transform:scaleX(1.186);transform-origin:0 0;">All Accumulated Objects by Class</div>
<svg style="left:286px;top:721px" width="17" height="13"><defs><linearGradient id="sg288_721" x1="0" y1="0" x2="0" y2="1"><stop offset="0" stop-color="#fff6c0"/><stop offset="1" stop-color="#f0c030"/></linearGradient></defs><rect x="2.5" y="0.5" width="13" height="11" fill="#fff" stroke="#6a5c38"/><rect x="2" y="0" width="14" height="3" fill="#4a7ec4"/><rect x="3" y="1" width="12" height="1" fill="#b0d4f4"/><path d="M1.2,4.5 Q2.5,2.8 3.8,4.2 Q5,2.6 6.6,3.8 L9.6,6.8 L6.6,9.8 L6,10.8 H4.6 V9.2 Q2,9.4 1.2,7.2 Z" fill="url(#sg288_721)" stroke="#d08a10" stroke-width="1"/></svg>
<div class="a" style="left:0px;top:704px;width:379px;height:42px;border:3px solid #ff1c1c;border-radius:4px"></div>
<div class="a" style="left:14px;top:757px;width:617px;height:200px;border:1px solid #6e6e6e;background:#fff"></div>
<div class="t" style="left:25.5px;top:764px;font-size:11px;line-height:12.65px;font-weight:bold;color:#000;letter-spacing:0px;transform:scaleX(1.106);transform-origin:0 0;">Class Name</div>
<div class="t" style="left:454px;top:764px;font-size:11px;line-height:12.65px;font-weight:bold;color:#000;letter-spacing:0px;transform:scaleX(1.12);transform-origin:0 0;">Objects</div>
<div class="t" style="left:533.6px;top:764px;font-size:11px;line-height:12.65px;font-weight:bold;color:#000;letter-spacing:0px;transform:scaleX(1.137);transform-origin:0 0;">Shallow Heap</div>
<div class="a" style="left:17px;top:781px;width:427px;height:32px;background:#ececec;border-left:1px solid #dadada;box-sizing:border-box"></div>
<div class="a" style="left:446px;top:781px;width:78px;height:32px;background:#ececec;border-left:1px solid #dadada;box-sizing:border-box"></div>
<div class="a" style="left:526px;top:781px;width:104px;height:32px;background:#ececec;border-left:1px solid #dadada;box-sizing:border-box"></div>
<div class="a" style="left:17px;top:815px;width:427px;height:32px;background:#fff;border-left:1px solid #dadada;box-sizing:border-box"></div>
<div class="a" style="left:446px;top:815px;width:78px;height:32px;background:#fff;border-left:1px solid #dadada;box-sizing:border-box"></div>
<div class="a" style="left:526px;top:815px;width:104px;height:32px;background:#fff;border-left:1px solid #dadada;box-sizing:border-box"></div>
<div class="a" style="left:17px;top:849px;width:427px;height:32px;background:#ececec;border-left:1px solid #dadada;box-sizing:border-box"></div>
<div class="a" style="left:446px;top:849px;width:78px;height:32px;background:#ececec;border-left:1px solid #dadada;box-sizing:border-box"></div>
<div class="a" style="left:526px;top:849px;width:104px;height:32px;background:#ececec;border-left:1px solid #dadada;box-sizing:border-box"></div>
<div class="a" style="left:17px;top:883px;width:427px;height:32px;background:#fff;border-left:1px solid #dadada;box-sizing:border-box"></div>
<div class="a" style="left:446px;top:883px;width:78px;height:32px;background:#fff;border-left:1px solid #dadada;box-sizing:border-box"></div>
<div class="a" style="left:526px;top:883px;width:104px;height:32px;background:#fff;border-left:1px solid #dadada;box-sizing:border-box"></div>
<svg style="left:27px;top:785px" width="14" height="14"><circle cx="6.5" cy="6.5" r="6" fill="#3ca63c" stroke="#24703a" stroke-width="1"/><path d="M8.9,4.6 A2.8,3.1 0 1 0 8.9,8.4" fill="none" stroke="#fff" stroke-width="1.7"/></svg>
<div class="t" style="left:42px;top:784.94px;font-size:12px;line-height:13.8px;font-weight:normal;color:#0a64d0;letter-spacing:0.9px;text-decoration:underline;text-underline-offset:1px">int[]</div>
<div class="t" style="left:42px;top:798.44px;font-size:12px;line-height:13.8px;font-weight:normal;color:#0a64d0;letter-spacing:0.15px;text-decoration:underline;text-underline-offset:1px">First 10 of 1,055,092 objects</div>
<div class="t" style="right:486.50px;top:792px;font-size:11px;line-height:12.65px;font-weight:normal;color:#000;letter-spacing:0px;transform:scaleX(1.11);transform-origin:100% 0;">1,055,092</div>
<div class="t" style="right:380.50px;top:792px;font-size:11px;line-height:12.65px;font-weight:normal;color:#000;letter-spacing:0px;transform:scaleX(1.11);transform-origin:100% 0;">4,432,520,024</div>
<svg style="left:27px;top:819px" width="14" height="14"><circle cx="6.5" cy="6.5" r="6" fill="#3ca63c" stroke="#24703a" stroke-width="1"/><path d="M8.9,4.6 A2.8,3.1 0 1 0 8.9,8.4" fill="none" stroke="#fff" stroke-width="1.7"/></svg>
<div class="t" style="left:42px;top:818.94px;font-size:12px;line-height:13.8px;font-weight:normal;color:#0a64d0;letter-spacing:0.3px;text-decoration:underline;text-underline-offset:1px">java.lang.String[]</div>
<div class="t" style="left:42px;top:832.44px;font-size:12px;line-height:13.8px;font-weight:normal;color:#0a64d0;letter-spacing:0.13px;text-decoration:underline;text-underline-offset:1px">First 10 of 527,620 objects</div>
<div class="t" style="right:486.50px;top:826px;font-size:11px;line-height:12.65px;font-weight:normal;color:#000;letter-spacing:0px;transform:scaleX(1.11);transform-origin:100% 0;">527,620</div>
<div class="t" style="right:380.50px;top:826px;font-size:11px;line-height:12.65px;font-weight:normal;color:#000;letter-spacing:0px;transform:scaleX(1.11);transform-origin:100% 0;">112,654,680</div>
<svg style="left:27px;top:853px" width="14" height="14"><circle cx="6.5" cy="6.5" r="6" fill="#3ca63c" stroke="#24703a" stroke-width="1"/><path d="M8.9,4.6 A2.8,3.1 0 1 0 8.9,8.4" fill="none" stroke="#fff" stroke-width="1.7"/></svg>
<div class="t" style="left:42px;top:852.94px;font-size:12px;line-height:13.8px;font-weight:normal;color:#0a64d0;letter-spacing:0.1px;text-decoration:underline;text-underline-offset:1px">org.apache.ignite.internal.binary.BinarySchema</div>
<div class="t" style="left:42px;top:866.44px;font-size:12px;line-height:13.8px;font-weight:normal;color:#0a64d0;letter-spacing:0.13px;text-decoration:underline;text-underline-offset:1px">First 10 of 527,620 objects</div>
<div class="t" style="right:486.50px;top:859px;font-size:11px;line-height:12.65px;font-weight:normal;color:#000;letter-spacing:0px;transform:scaleX(1.11);transform-origin:100% 0;">527,620</div>
<div class="t" style="right:380.50px;top:859px;font-size:11px;line-height:12.65px;font-weight:normal;color:#000;letter-spacing:0px;transform:scaleX(1.11);transform-origin:100% 0;">25,325,760</div>
<svg style="left:27px;top:887px" width="14" height="14"><circle cx="6.5" cy="6.5" r="6" fill="#3ca63c" stroke="#24703a" stroke-width="1"/><path d="M8.9,4.6 A2.8,3.1 0 1 0 8.9,8.4" fill="none" stroke="#fff" stroke-width="1.7"/></svg>
<div class="t" style="left:42px;top:886.94px;font-size:12px;line-height:13.8px;font-weight:normal;color:#0a64d0;letter-spacing:0.0px;text-decoration:underline;text-underline-offset:1px">java.util.HashMap$Node</div>
<div class="t" style="left:42px;top:900.44px;font-size:12px;line-height:13.8px;font-weight:normal;color:#0a64d0;letter-spacing:0.13px;text-decoration:underline;text-underline-offset:1px">First 10 of 533,652 objects</div>
<div class="t" style="right:486.50px;top:893px;font-size:11px;line-height:12.65px;font-weight:normal;color:#000;letter-spacing:0px;transform:scaleX(1.11);transform-origin:100% 0;">533,652</div>
<div class="t" style="right:380.50px;top:893px;font-size:11px;line-height:12.65px;font-weight:normal;color:#000;letter-spacing:0px;transform:scaleX(1.11);transform-origin:100% 0;">17,076,864</div>
<div class="a" style="left:971px;top:52px;width:17px;height:867px;background:#f0f0f0"></div>
<div class="a" style="left:972px;top:214px;width:15px;height:424px;background:#cdcdcd"></div>
<div class="a" style="left:6px;top:919px;width:982px;height:11px;background:#f0f0f0"></div>
<div class="a" style="left:40px;top:920px;width:895px;height:10px;background:#cdcdcd"></div>
<svg style="left:0;top:0" width="1002" height="930"><g fill="#606060"><path d="M974,78 V74.4 L979.5,68.8 L985.1,74.4 V78 L979.5,72.6 Z"/><path d="M974,893 V896.5 L979.5,901.9 L985.1,896.5 V893 L979.5,898.3 Z"/><path d="M28.3,922 H32.2 L27.3,927.2 L32.2,932.4 H28.3 L23,927.2 Z"/><path d="M944.8,922 H948.7 L954,927.2 L948.7,932.4 H944.8 L949.7,927.2 Z"/></g></svg>
</body></html>
